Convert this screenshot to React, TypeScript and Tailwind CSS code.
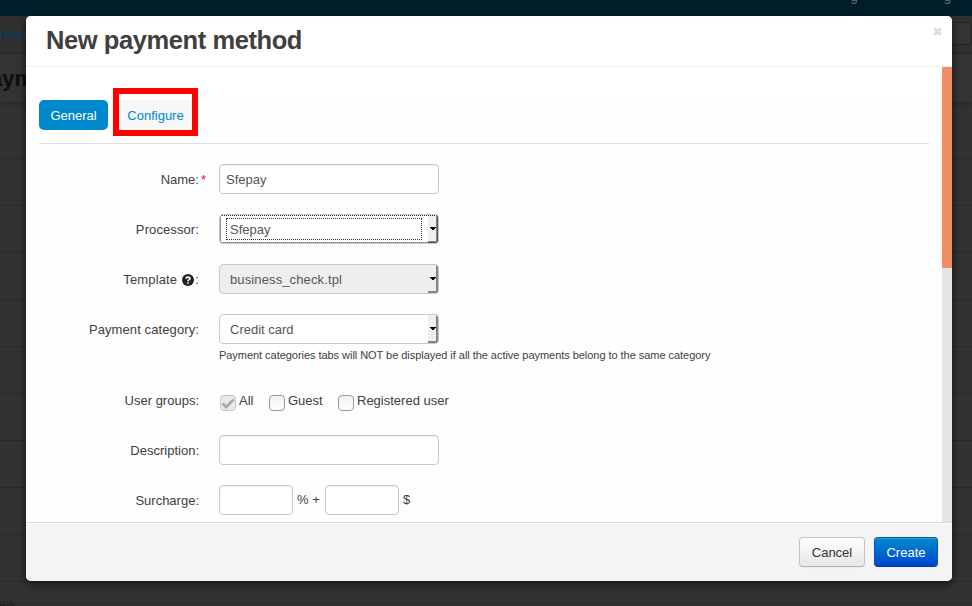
import type { ReactNode } from "react";

function Row({ label, children, top = "mt-5" }: { label: ReactNode; children: ReactNode; top?: string }) {
  return (
    <div className={`flex ${top}`}>
      <div className="w-[160px] shrink-0 text-right leading-5 pt-[6px] whitespace-nowrap">{label}</div>
      <div className="ml-5">{children}</div>
    </div>
  );
}

const box =
  "block h-[30px] rounded-[4px] border border-[#c8c8c8] bg-white text-[#555] outline-none shadow-[inset_0_1px_1px_rgba(0,0,0,0.075)]";

function Select({ value, focused, disabled }: { value: string; focused?: boolean; disabled?: boolean }) {
  return (
    <div
      className={`flex h-[30px] w-[220px] overflow-hidden rounded-[4px] border text-[#555] border-[#c8c8c8] ${
        disabled ? "bg-[#eee] tracking-[0.12px]" : "bg-white"
      } relative`}
    >
      <div
        className={`mt-[3px] ml-[6px] mr-[6px] flex h-[22px] flex-1 items-center border pl-[3px] pt-[2px] ${
          focused ? "border-dotted border-[#333]" : "border-transparent"
        }`}
      >
        {value}
      </div>
      <div className="flex h-[28px] w-[10px] items-center justify-center border-r-2 border-b-2 border-[#858585] bg-[#efefec]">
        <svg width="6" height="4" viewBox="0 0 6 4" className="ml-[2px] mt-[2px] shrink-0" shapeRendering="crispEdges">
          <path d="M0 0h6L3 3.5z" fill="#000" />
        </svg>
      </div>
      {focused && <div className="absolute inset-0 rounded-[2px] border border-dotted border-[#222]" />}
    </div>
  );
}

function Check({ label, checked }: { label: string; checked?: boolean }) {
  return (
    <label className="flex h-5">
      <span
        className={`mt-[5px] ml-px mr-[3px] flex h-4 w-4 items-center justify-center rounded-[4px] border ${
          checked ? "border-[#c4c4c4] bg-[#e9e9e9]" : "border-[#999] bg-linear-to-b from-[#f1f1f1] to-white"
        }`}
      >
        {checked && (
          <svg width="14" height="13" viewBox="0 0 14 13" className="shrink-0">
            <path d="M1.5 6.5l3.6 3.6L12.5 2.6" fill="none" stroke="#a6a6a6" strokeWidth="2.7" />
          </svg>
        )}
      </span>
      <span className="pt-px leading-5">{label}</span>
    </label>
  );
}

function Backdrop() {
  return (
    <div className="absolute inset-0 overflow-hidden bg-[#323232]">
      <div className="flex h-4 justify-end bg-[#001e29] text-[13px] leading-4 text-[#66747b]">
        <span className="-mt-[11px] mr-[86px]">g</span>
        <span className="-mt-[11px] mr-[21px]">g</span>
      </div>
      <div className="flex h-[38px] justify-between border-b border-[#292929] bg-[#303030]">
        <span className="mt-[9px] text-[13px] leading-5 text-[#00415f]">Prod</span>
        <div className="mt-[6px] h-[23px] w-12 rounded-[3px] border border-[#262626] bg-[#333]" />
      </div>
      <div className="h-[49px] border-b border-[#292929] bg-[#333] shadow-[0_2px_4px_rgba(0,0,0,0.15)]">
        <div className="-ml-[10px] pt-[12px] text-[22px] font-bold leading-[26px] text-[#0d0d0d]">aym</div>
      </div>
      <div className="pt-[9px]">
        {Array.from({ length: 10 }, (_, i) => (
          <div key={i} className="h-[47px] border-b border-[#2a2a2a]" />
        ))}
      </div>
      <div className="-ml-[5px] h-[23px] border-b border-[#292929] pt-[14px] text-[13px] leading-4 text-[#1f1f1f]">ook</div>
    </div>
  );
}

export default function App() {
  return (
    <div className="relative h-[606px] w-[972px] overflow-hidden font-['Liberation_Sans',Arial,sans-serif] text-[13px] text-[#404040]">
      <Backdrop />
      <div className="relative px-[26px] pt-4 pr-5">
        <div className="flex h-[565px] flex-col overflow-hidden rounded-[5px] bg-[#fdfdfd] shadow-[0_3px_9px_rgba(0,0,0,0.6)]">
          <header className="flex h-[51px] shrink-0 justify-between border-b border-[#eee] bg-white pl-5 pr-[10px]">
            <h3 className="pt-[4px] text-[25.5px] font-bold leading-10 tracking-[-0.42px] text-[#404040]">New payment method</h3>
            <svg width="9" height="9" viewBox="0 0 9 9" className="mt-[11px]">
              <path d="M1.2 1.2l6.6 6.6M7.8 1.2L1.2 7.8" stroke="#dedede" strokeWidth="3" />
            </svg>
          </header>
          <div className="flex h-[455px] shrink-0">
            <main className="flex-1 overflow-hidden bg-linear-to-b from-white to-[#fdfdfd] pl-[13px] pr-[13px]">
              <nav className="flex h-[77px] border-b border-[#ddd] pt-[21px]">
                <span className="mt-3 flex h-[30px] w-[69px] items-center justify-center rounded-[5px] bg-[#08c] pt-[2px] text-white">
                  General
                </span>
                <div className="ml-[5px] h-12 w-[85px] border-[6px] border-[#fe0000] pt-[6px]">
                  <div className="flex h-[30px] items-center justify-center bg-[#f7f7f7] pt-[2px] text-[#08c]">Configure</div>
                </div>
              </nav>
              <Row label={<>Name:<span className="ml-[2px] -mr-[7px] text-[#f03]">*</span></>}>
                <input className={`${box} w-[220px] px-[6px]`} defaultValue="Sfepay" />
              </Row>
              <Row label={<span className="tracking-[0.1px]">Processor:</span>}>
                <Select value="Sfepay" focused />
              </Row>
              <Row
                label={
                  <span className="flex items-center justify-end tracking-[0.15px]">
                    Template
                    <svg width="12" height="12" viewBox="0 0 12 12" className="-mt-px ml-[5px] mr-px">
                      <circle cx="6" cy="6" r="6" fill="#222" />
                      <path d="M4 4.8C4 2.6 8 2.6 8 4.5C8 5.8 6 5.6 6 7.3" fill="none" stroke="#fff" strokeWidth="1.6" />
                      <path d="M5.2 8.3h1.6v1.5H5.2z" fill="#fff" />
                    </svg>
                    :
                  </span>
                }
              >
                <Select value="business_check.tpl" disabled />
              </Row>
              <Row label={<span className="tracking-[0.1px]">Payment category:</span>}>
                <Select value="Credit card" />
                <p className="mt-[3px] h-[17px] whitespace-nowrap text-[11px] leading-4 tracking-[-0.043px]">
                  Payment categories tabs will NOT be displayed if all the active payments belong to the same category
                </p>
              </Row>
              <Row label="User groups:" top="mt-[21px]">
                <div className="flex h-[30px] pt-[5px]">
                  <div className="w-[49px]"><Check label="All" checked /></div>
                  <div className="w-[69px]"><Check label="Guest" /></div>
                  <Check label="Registered user" />
                </div>
              </Row>
              <Row label="Description:">
                <input className={`${box} w-[220px] px-[6px]`} />
              </Row>
              <Row label="Surcharge:">
                <div className="flex">
                  <input className={`${box} w-[74px]`} />
                  <span className="w-8 pl-1 leading-[30px] whitespace-nowrap">% +</span>
                  <input className={`${box} w-[74px]`} />
                  <span className="pl-1 leading-[30px]">$</span>
                </div>
              </Row>
            </main>
            <div className="w-[10px] bg-[#e5e5e5]">
              <div className="h-[201px] bg-[#f08e66]" />
            </div>
          </div>
          <footer className="flex flex-1 justify-end gap-[9px] border-t border-[#ddd] bg-[#f4f4f4] pr-[14px] pt-[14px] shadow-[inset_0_1px_0_#fff]">
            <button className="h-[30px] w-[66px] rounded-[4px] border border-[#c5c5c5] border-b-[#b3b3b3] bg-linear-to-b from-white to-[#e6e6e6] pt-[2px] text-[#333] shadow-[0_1px_2px_rgba(0,0,0,0.05)]">
              Cancel
            </button>
            <button className="h-[30px] w-16 rounded-[4px] border border-[#0055b5] border-b-[#003da5] bg-linear-to-b from-[#08c] to-[#04c] pt-[2px] text-white shadow-[inset_0_1px_0_rgba(255,255,255,0.2)]">
              Create
            </button>
          </footer>
        </div>
      </div>
    </div>
  );
}
